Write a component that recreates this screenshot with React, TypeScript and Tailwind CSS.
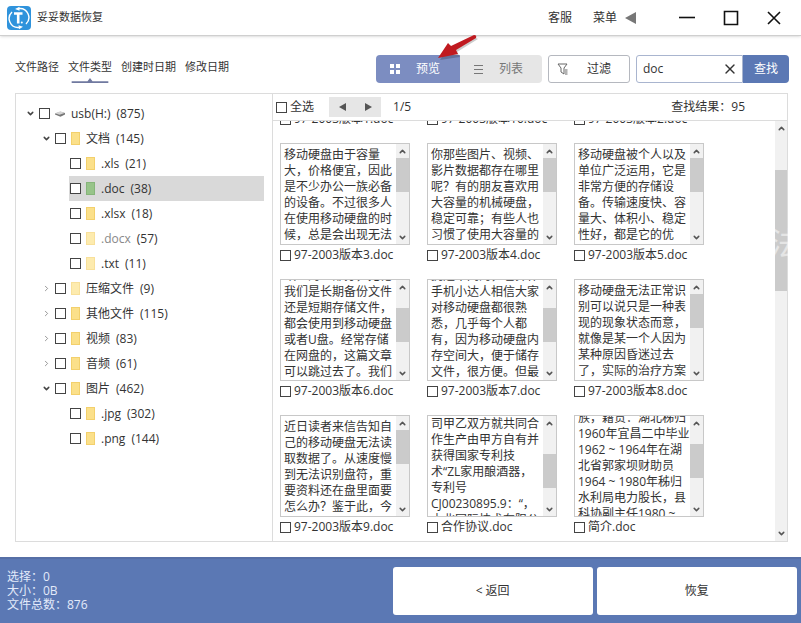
import { useState } from "react";
import { ChevronDown, ChevronRight, ChevronUp, X } from "lucide-react";

const tabs = ["文件路径", "文件类型", "创建时日期", "修改日期"];

const tree = [
  { name: "usb(H:)", count: 875, level: 0, state: "open", icon: "drive" },
  { name: "文档", count: 145, level: 1, state: "open", icon: "folder" },
  { name: ".xls", count: 21, level: 2, state: "leaf", icon: "folder" },
  { name: ".doc", count: 38, level: 2, state: "leaf", icon: "active" },
  { name: ".xlsx", count: 18, level: 2, state: "leaf", icon: "folder" },
  { name: ".docx", count: 57, level: 2, state: "leaf", icon: "pale" },
  { name: ".txt", count: 11, level: 2, state: "leaf", icon: "pale" },
  { name: "压缩文件", count: 9, level: 1, state: "closed", icon: "pale" },
  { name: "其他文件", count: 115, level: 1, state: "closed", icon: "folder" },
  { name: "视频", count: 83, level: 1, state: "closed", icon: "folder" },
  { name: "音频", count: 61, level: 1, state: "closed", icon: "folder" },
  { name: "图片", count: 462, level: 1, state: "open", icon: "folder" },
  { name: ".jpg", count: 302, level: 2, state: "leaf", icon: "folder" },
  { name: ".png", count: 144, level: 2, state: "leaf", icon: "folder" },
];

const levelPadding = ["pl-[10px]", "pl-[26px]", "pl-[1px]"];

const iconColors: Record<string, string> = {
  folder: "bg-[#fbe08a] border-[#f3d06c]",
  active: "bg-[#97c489] border-[#86b57a]",
  pale: "bg-[#fdebae] border-[#f8e09a]",
};

const files = [
  { name: "97-2003版本1.doc", lines: [], align: "", thumb: "" },
  { name: "97-2003版本10.doc", lines: [], align: "", thumb: "" },
  { name: "97-2003版本2.doc", lines: [], align: "", thumb: "" },
  {
    name: "97-2003版本3.doc",
    lines: ["移动硬盘由于容量", "大，价格便宜，因此", "是不少办公一族必备", "的设备。不过很多人", "在使用移动硬盘的时", "候，总是会出现无法"],
    align: "justify-start",
    thumb: "mt-0",
  },
  {
    name: "97-2003版本4.doc",
    lines: ["你那些图片、视频、", "影片数据都存在哪里", "呢？有的朋友喜欢用", "大容量的机械硬盘，", "稳定可靠；有些人也", "习惯了使用大容量的"],
    align: "justify-start",
    thumb: "mt-0",
  },
  {
    name: "97-2003版本5.doc",
    lines: ["移动硬盘被个人以及", "单位广泛运用，它是", "非常方便的存储设", "备。传输速度快、容", "量大、体积小、稳定", "性好，都是它的优"],
    align: "justify-start",
    thumb: "mt-0",
  },
  {
    name: "97-2003版本6.doc",
    lines: ["缺少的一部分，无论", "我们是长期备份文件", "还是短期存储文件，", "都会使用到移动硬盘", "或者U盘。经常存储", "在网盘的，这篇文章", "可以跳过去了。我们"],
    align: "justify-end",
    thumb: "mt-[14px]",
  },
  {
    name: "97-2003版本7.doc",
    lines: ["挑选不同的，也算作", "手机小达人相信大家", "对移动硬盘都很熟", "悉，几乎每个人都", "有，因为移动硬盘内", "存空间大，便于储存", "文件，很方便。但最"],
    align: "justify-end",
    thumb: "mt-[14px]",
  },
  {
    name: "97-2003版本8.doc",
    lines: ["移动硬盘无法正常识", "别可以说只是一种表", "现的现象状态而意，", "就像是某一个人因为", "某种原因昏迷过去", "了，实际的治疗方案"],
    align: "justify-start",
    thumb: "mt-0",
  },
  {
    name: "97-2003版本9.doc",
    lines: ["近日读者来信告知自", "己的移动硬盘无法读", "取数据了。从速度慢", "到无法识别盘符，重", "要资料还在盘里面要", "怎么办？鉴于此，今"],
    align: "justify-start",
    thumb: "mt-0",
  },
  {
    name: "合作协议.doc",
    lines: ["司甲乙双方就共同合", "作生产由甲方自有并", "获得国家专利技", "术“ZL家用酿酒器，", "专利号", "CJ00230895.9：“，", "由北国际技术有限公"],
    align: "justify-start",
    thumb: "mt-6",
  },
  {
    name: "简介.doc",
    lines: ["族，籍贯：湖北秭归", "1960年宜昌二中毕业", "1962 ~ 1964年在湖", "北省郭家坝财助员", "1964 ~ 1980年秭归", "水利局电力股长，县", "科协副主任1980 ~"],
    align: "justify-center",
    thumb: "mt-[14px]",
  },
];

function Check({ label }: { label: string }) {
  return (
    <input
      type="checkbox"
      aria-label={label}
      className="size-[11px] shrink-0 appearance-none border border-[#444] bg-white checked:bg-[#5b78b4]"
    />
  );
}

function TreeIcon({ icon }: { icon: string }) {
  if (icon === "drive") {
    return (
      <svg viewBox="0 0 11 8" className="h-2 w-[10px] shrink-0">
        <path d="M0 3.5 6 1.5l5 1.5v1.5L6 7 0 4.5Z" fill="#777" />
        <path d="M0 3.3 6 1l4.500 1.800L5 4.800Z" fill="#d4d4d4" />
      </svg>
    );
  }
  return <span className={`h-[13px] w-[9px] shrink-0 border ${iconColors[icon]}`} />;
}

function TreeRow({ item }: { item: (typeof tree)[number] }) {
  const selected = item.icon === "active";

  return (
    <li className={item.level === 2 ? "pr-2 pl-[53px]" : "pr-2"}>
      <div
        className={`flex h-[25px] items-center ${levelPadding[item.level]} ${
          selected ? "bg-[#d9d9d9]" : ""
        }`}
      >
        {item.state !== "leaf" && (
          <button aria-label={item.name} className="mr-1 w-[9px]">
            {item.state === "open" ? (
              <ChevronDown size={9} strokeWidth={4} color="#444" />
            ) : (
              <ChevronRight size={9} strokeWidth={2} color="#777" />
            )}
          </button>
        )}
        <Check label={item.name} />
        <span className="mr-[6px] ml-[5px] flex">
          <TreeIcon icon={item.icon} />
        </span>
        <span className={item.name === ".docx" ? "text-[#888]" : ""}>{item.name}</span>
        <span className="ml-[6px]">({item.count})</span>
      </div>
    </li>
  );
}

function Preview({ file }: { file: (typeof files)[number] }) {
  return (
    <div className="flex h-[102px] border border-[#c8c8c8] bg-white">
      <div className={`flex min-w-0 flex-1 flex-col overflow-hidden pl-[3px] ${file.align}`}>
        {file.lines.length === 6 && <div className="h-[3px] shrink-0" />}
        {file.lines.map((line) => (
          <p key={line} className="shrink-0 leading-4 whitespace-nowrap">
            {line}
          </p>
        ))}
      </div>
      <div className="flex w-[13px] shrink-0 flex-col items-center bg-[#f1f1f1]">
        <span className="flex h-[14px] items-center">
          <ChevronUp size={9} strokeWidth={4} color="#555" />
        </span>
        <div className="w-full flex-1">
          <div className={`h-[34px] w-full bg-[#cbcbcb] ${file.thumb}`} />
        </div>
        <span className="flex h-[14px] items-center">
          <ChevronDown size={9} strokeWidth={4} color="#555" />
        </span>
      </div>
    </div>
  );
}

function FileCard({ file }: { file: (typeof files)[number] }) {
  return (
    <div className="w-[130px]">
      {file.lines.length > 0 && <Preview file={file} />}
      <label className="flex h-5 items-center gap-[3px] whitespace-nowrap">
        <Check label={file.name} />
        {file.name}
      </label>
    </div>
  );
}

function Logo() {
  return (
    <svg viewBox="0 0 24 24" className="size-6">
      <rect width="24" height="24" rx="4" fill="#2f93dc" />
      <g fill="none" stroke="#fff" strokeWidth="1.400">
        <path d="M5 6A9 9 0 0 0 12 21.500" />
        <path d="M19 18A9 9 0 0 0 12 2.500" />
      </g>
      <path d="M7 7.500h8.500M11.200 7.500V17.500" stroke="#fff" strokeWidth="2.600" />
      <path d="M11.500 19.200 16 20.800 12 23.200ZM12.500 .8 8 3 12.500 4.800Z" fill="#fff" />
      <circle cx="14.800" cy="16.500" r="1" fill="#fff" />
    </svg>
  );
}

export default function App() {
  const [tab, setTab] = useState("文件类型");
  const [query, setQuery] = useState("doc");

  return (
    <div className="relative flex h-screen flex-col overflow-hidden bg-white font-['Open_Sans','Noto_Sans_CJK_SC',sans-serif] text-xs text-[#333]">
      <header className="flex h-9 shrink-0 items-center border-b border-[#cfcfcf] pr-5 pl-[7px] shadow-sm">
        <Logo />
        <h1 className="ml-[6px] flex-1 text-[11px]">妥妥数据恢复</h1>
        <button>客服</button>
        <button className="ml-[21px] flex items-center gap-2">
          菜单
          <svg viewBox="0 0 11 12" className="h-3 w-[11px]">
            <path d="M11 0v12L0 6Z" fill="#777" />
          </svg>
        </button>
        <div className="ml-[43px] flex items-center gap-7">
          <button aria-label="最小化">
            <svg viewBox="0 0 16 16" className="size-4">
              <path d="M0 7.500h16" stroke="#111" strokeWidth="1.600" />
            </svg>
          </button>
          <button aria-label="最大化">
            <svg viewBox="0 0 16 16" className="size-4">
              <path d="M1.500 1.500h13v13h-13Z" fill="none" stroke="#111" strokeWidth="1.600" />
            </svg>
          </button>
          <button aria-label="关闭">
            <svg viewBox="0 0 14 14" className="size-[14px]">
              <path d="m1 1 12 12M13 1 1 13" stroke="#111" strokeWidth="1.600" />
            </svg>
          </button>
        </div>
      </header>

      <div className="flex shrink-0 items-start pt-[19px] pr-3 pb-[10px] pl-[15px]">
        <nav className="flex flex-1 gap-[9px] text-[11px]">
          {tabs.map((item) => (
            <button
              key={item}
              onClick={() => setTab(item)}
              className="flex h-7 flex-col pt-[3px] whitespace-nowrap"
            >
              <span className="leading-[18px]">{item}</span>
              {tab === item && (
                <svg viewBox="0 0 44 6" className="mt-[2px] h-[6px] w-11">
                  <path d="M0 4h19l3-4 3 4h19v2H0Z" fill="#7079a0" />
                </svg>
              )}
            </button>
          ))}
        </nav>

        <div className="flex h-7 gap-[6px]">
          <div className="relative flex">
            <button className="flex w-[84px] items-center gap-4 rounded-l bg-[#7c8dc1] pl-[14px] text-white">
              <svg viewBox="0 0 10 10" className="size-[10px]">
                <path d="M0 0h4v4H0ZM6 0h4v4H6ZM0 6h4v4H0ZM6 6h4v4H6Z" fill="#fff" />
              </svg>
              预览
            </button>
            <button className="flex w-[82px] items-center gap-4 rounded-r bg-[#e6e6e6] pl-[14px] text-[#777]">
              <svg viewBox="0 0 9 11" className="h-[11px] w-[9px]">
                <path d="M0 1.500h9M0 5.500h9M0 9.500h9" stroke="#777" />
              </svg>
              列表
            </button>
            {/* pointer to the preview button */}
            <svg viewBox="0 0 44 30" className="pointer-events-none absolute -top-5 left-[60px] h-[30px] w-11">
              <path d="M42 4 21 17l3 5L4 25 14 10l4 4L38 2Z" fill="#000" opacity=".2" />
              <path d="M38 0q3 0 2 3L20 15l2 4L2 23 12 8l3 3Z" fill="#c01a20" />
            </svg>
          </div>

          <button className="flex w-[82px] items-center gap-[19px] rounded-[3px] border border-[#b5b8bf] pl-2">
            <svg viewBox="0 0 11 12" className="h-3 w-[11px]" fill="none" stroke="#666">
              <path d="M1 1h9L7 5v6L4 9V5ZM8 7h2.500M8 9h2.500M8 11h2.500" />
            </svg>
            过滤
          </button>

          <div className="flex w-[153px]">
            <div className="flex min-w-0 flex-1 items-center rounded-l-[3px] border border-[#a9b5cf] pr-1">
              <input
                aria-label="查找"
                value={query}
                onChange={(e) => setQuery(e.target.value)}
                className="min-w-0 flex-1 pl-[6px] outline-none"
              />
              <button aria-label="清除" onClick={() => setQuery("")}>
                <X size={16} strokeWidth={2} color="#333" />
              </button>
            </div>
            <button className="w-[46px] rounded-r bg-[#5b78b4] text-white">查找</button>
          </div>
        </div>
      </div>

      <main className="mr-[13px] mb-[15px] ml-[15px] flex min-h-0 flex-1 border border-[#dcdcdc]">
        <ul className="w-[257px] shrink-0 border-r border-[#dcdcdc] pt-[7px]">
          {tree.map((item) => (
            <TreeRow key={item.name} item={item} />
          ))}
        </ul>

        <section className="flex min-w-0 flex-1 flex-col">
          <div className="flex h-[27px] shrink-0 items-center border-b border-[#dcdcdc] pl-[3px]">
            <label className="flex items-center gap-[3px]">
              <Check label="全选" />
              全选
            </label>
            <div className="ml-[15px] flex h-5">
              <button aria-label="上一页" className="flex w-[26px] items-center justify-center bg-[#e6e6e6]">
                <svg viewBox="0 0 7 8" className="h-2 w-[7px]">
                  <path d="M7 0v8L0 4Z" fill="#555" />
                </svg>
              </button>
              <button aria-label="下一页" className="flex w-[26px] items-center justify-center bg-[#e6e6e6]">
                <svg viewBox="0 0 7 8" className="h-2 w-[7px]">
                  <path d="M0 0v8l7-4Z" fill="#555" />
                </svg>
              </button>
            </div>
            <span className="ml-3 flex-1">1/5</span>
            <span className="mr-[42px]">查找结果：95</span>
          </div>

          <div className="flex min-h-0 flex-1">
            <div className="flex min-w-0 flex-1 flex-col justify-end overflow-hidden pb-1 pl-[7px]">
              <div className="flex shrink-0 flex-wrap gap-x-[17px] gap-y-[14px]">
                {files.map((file) => (
                  <FileCard key={file.name} file={file} />
                ))}
              </div>
            </div>
            <div className="flex w-3 shrink-0 flex-col items-center bg-[#f1f1f1]">
              <ChevronUp size={9} strokeWidth={4} color="#555" className="my-[3px] shrink-0" />
              <div className="w-full flex-1 pt-[34px]">
                <div className="h-[121px] bg-[#cbcbcb]" />
              </div>
              <ChevronDown size={9} strokeWidth={4} color="#555" className="my-[3px] shrink-0" />
            </div>
          </div>
        </section>
      </main>

      <footer className="flex shrink-0 items-center gap-1 border-t-2 border-[#566fa6] bg-[#5b78b4] py-2 pr-1 pl-[7px]">
        <div className="min-w-0 flex-1 leading-[14px] text-[#e3eafa]">
          <p>选择：0</p>
          <p>大小：0B</p>
          <p>文件总数：876</p>
        </div>
        <button className="h-12 w-[25vw] shrink-0 rounded-[3px] bg-white">&lt; 返回</button>
        <button className="h-12 w-[25vw] shrink-0 rounded-[3px] bg-white">恢复</button>
      </footer>

      {/* watermark */}
      <span
        aria-hidden="true"
        className="pointer-events-none absolute top-[218px] right-0 text-[32px] leading-[50px] text-white/50"
      >
        法
      </span>
    </div>
  );
}
